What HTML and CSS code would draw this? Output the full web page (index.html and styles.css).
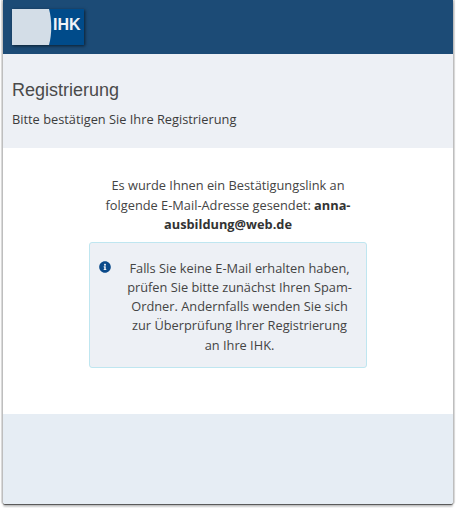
FILE: index.html
```html
<!DOCTYPE html>
<html lang="de">
<head>
<meta charset="utf-8">
<title>Registrierung</title>
<link rel="stylesheet" href="styles.css">
</head>
<body>
<div class="window">
  <header class="topbar">
    <div class="logo">
      <svg class="logo-art" width="72" height="36" viewBox="0 0 72 36" aria-hidden="true">
        <rect width="72" height="36" fill="#004b8a"/>
        <path d="M0 0H37C40 11 40 25 37 36H0Z" fill="#d3dde7"/>
      </svg>
      <span class="logo-text">IHK</span>
    </div>
  </header>
  <section class="intro">
    <h1 class="intro-title">Registrierung</h1>
    <p class="intro-sub">Bitte bestätigen Sie Ihre Registrierung</p>
  </section>
  <main class="content">
    <div class="column">
      <p class="message">Es wurde Ihnen ein Bestätigungslink an folgende E-Mail-Adresse gesendet: <strong>anna-ausbildung@web.de</strong></p>
      <div class="notice">
        <svg class="notice-icon" width="12" height="12" viewBox="0 0 512 512" aria-hidden="true">
          <path fill="#0b4a8a" d="M256 8C119 8 8 119 8 256s111 248 248 248 248-111 248-248S393 8 256 8zm0 110c23 0 42 19 42 42s-19 42-42 42-42-19-42-42 19-42 42-42zm56 254c0 7-5 12-12 12h-88c-7 0-12-5-12-12v-24c0-7 5-12 12-12h12v-64h-12c-7 0-12-5-12-12v-24c0-7 5-12 12-12h64c7 0 12 5 12 12v100h12c7 0 12 5 12 12z"/>
        </svg>
        <p class="notice-text">Falls Sie keine E-Mail erhalten haben, prüfen Sie bitte zunächst Ihren Spam-Ordner. Andernfalls wenden Sie sich zur Überprüfung Ihrer Registrierung an Ihre IHK.</p>
      </div>
    </div>
  </main>
  <footer class="footer"></footer>
</div>
</body>
</html>
```
FILE: styles.css
```css
* { box-sizing: border-box; }
html, body { margin: 0; height: 100%; background: #fff; overflow: hidden; }
body { padding: 0 3px 4px 3px; font-family: "Open Sans", sans-serif; color: #444; }
.window {
  height: 504px;
  display: flex;
  flex-direction: column;
  border-radius: 0 0 2px 2px;
  box-shadow: -2px 0 1px rgba(0,0,0,.16), 2px 0 1px rgba(0,0,0,.16), 0 1px 1px rgba(0,0,0,.6), 0 3px 2px rgba(0,0,0,.2);
}
.topbar { height: 54px; flex: none; background: #1c4b76; padding: 9px 0 0 9px; }
.logo { position: relative; width: 72px; height: 36px; box-shadow: 1px 1px 3px rgba(0,0,0,.6); }
.logo-art { display: block; }
.logo-text {
  position: absolute; top: 6px; left: 41px;
  font: bold 16px/20px "Liberation Sans", sans-serif; color: #eef3f8;
}
.intro { height: 94px; flex: none; background: #edf0f5; padding: 24px 9px 0; }
.intro-title { margin: 0; font: 400 18px/24px "Liberation Sans", sans-serif; color: #4a4a4a; }
.intro-sub { margin: 8px 0 0; font-size: 12.8px; line-height: 18px; color: #3c3c3c; }
.content { height: 266px; flex: none; background: #fff; display: flex; justify-content: center; padding-top: 28px; }
.column { width: 278px; }
.message { margin: 0 0 7px; padding: 0 8px; text-align: center; font-size: 12.8px; line-height: 19.6px; color: #444; }
.message strong { color: #333; }
.notice {
  position: relative; height: 126px; padding: 16px 13px 0 36px;
  background: #edf0f5; border: 1px solid #bfe6f0; border-radius: 3px;
}
.notice-icon { position: absolute; left: 9px; top: 18px; }
.notice-text { margin: 0; text-align: center; font-size: 12.8px; line-height: 19.2px; color: #444; }
.footer { flex: 1; background: #e6edf4; border-radius: 0 0 2px 2px; }
```
